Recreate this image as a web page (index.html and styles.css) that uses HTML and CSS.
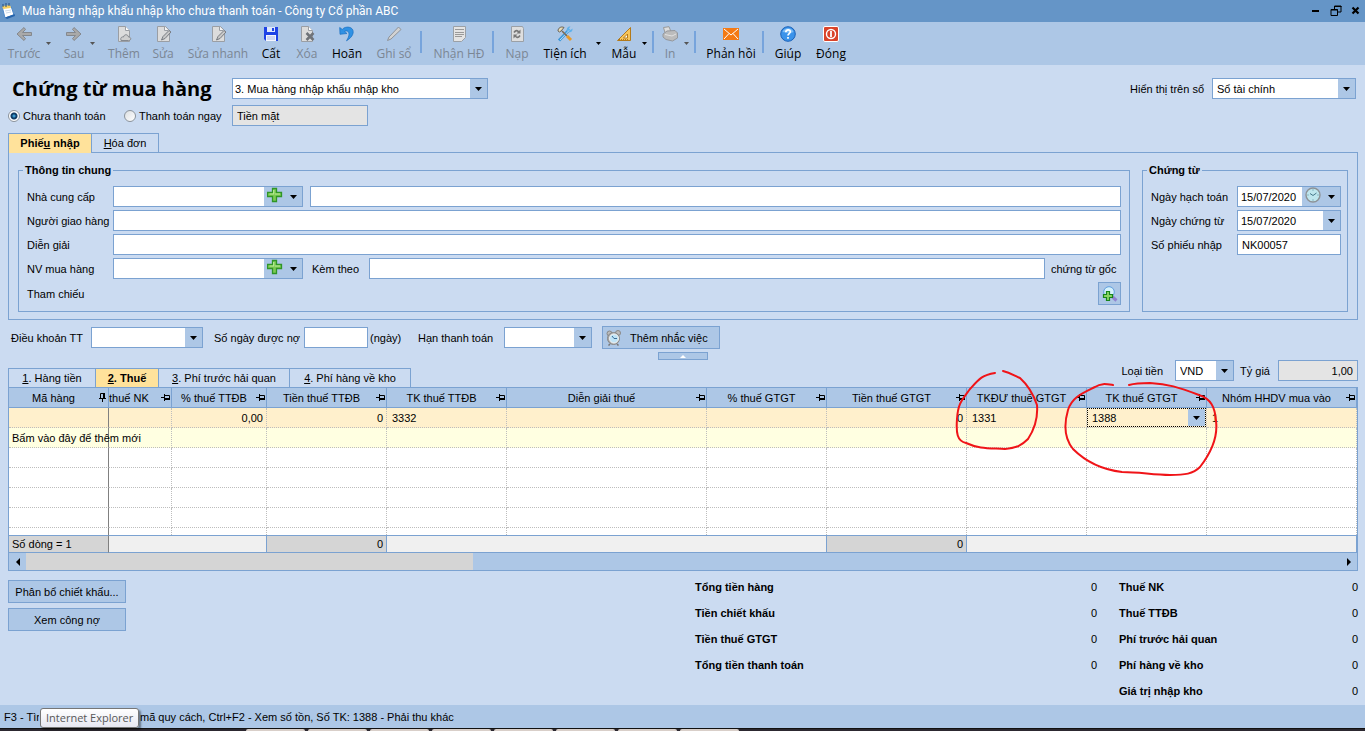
FILE: index.html
```html
<!DOCTYPE html>
<html lang="vi">
<head>
<meta charset="utf-8">
<title>Mua hàng nhập khẩu nhập kho chưa thanh toán</title>
<link rel="stylesheet" href="styles.css">
</head>
<body>
<svg class="defs" aria-hidden="true">
  <symbol id="pin" viewBox="0 0 9 9"><path d="M0 4.500h3M3.500 1v7M4 2.500h4.500v4M4 6h5" fill="none" stroke="#000"/><path d="M4 5h5v2H4z"/></symbol>
  <symbol id="down" viewBox="0 0 7 4"><path d="M0 0h7L3.500 4z"/></symbol>
  <symbol id="plus" viewBox="0 0 16 16"><path d="M5.500 1.500h4v4h5v4h-5v5h-4v-5h-5v-4h5z" fill="#7ccb52" stroke="#2f9527" stroke-width="1.300"/><path d="M6.700 3v4H2.500M8 7h5" fill="none" stroke="#b9eb98" stroke-width="1.200"/></symbol>
  <symbol id="doc" viewBox="0 0 16 16"><path d="M2.500.5h7l4 4v11h-11z" fill="#dcdcdc" stroke="#9a9ea4"/><path d="M9.500.5v4h4" fill="#fff" stroke="#9a9ea4"/></symbol>
  <symbol id="edit" viewBox="0 0 16 16"><path d="M2.500.5h8l4 4v11h-12z" fill="#dcdcdc" stroke="#9a9ea4"/><path d="M9.500.5v4h4" fill="#f5f5f5" stroke="#9a9ea4"/><path d="M14 4.500 8 10.500l-1.500 3.500L10 12.500 16 6z" fill="#c9c9c9" stroke="#777b81"/></symbol>
</svg>

<header class="titlebar">
  <svg class="app-icon" viewBox="0 0 16 16"><path d="M2 3h9l3 9-9 3z" fill="#fff" stroke="#4e88c8"/><path d="M2 3l8-1 1 3-8 1z" fill="#f6cf5e"/><path d="M5 14.500 14.500 11l.5 2-8 3z" fill="#2563ab"/><path d="M3 1v3M6 0v4M9 0v3" stroke="#274f84"/><path d="M5 8l6-1M6 10l5-1" stroke="#cbd9e8"/></svg>
  <span class="window-title">Mua hàng nhập khẩu nhập kho chưa thanh toán - Công ty Cổ phần ABC</span>
  <div class="window-buttons">
    <button type="button" aria-label="Thu nhỏ"><svg width="12" height="12" viewBox="0 0 12 12"><path d="M2 5h7v2H2z"/></svg></button>
    <button type="button" aria-label="Khôi phục"><svg width="12" height="12" viewBox="0 0 12 12"><path d="M4.500 4V1h6.500v6H8M1 4.500h6.500v6h-6.500zM4 1.500h7.500M1 5h7" fill="none" stroke="#000"/></svg></button>
    <button type="button" aria-label="Đóng cửa sổ"><svg width="12" height="12" viewBox="0 0 12 12"><path d="M2.500 2.500l6 6M8.500 2.500l-6 6" stroke="#000" stroke-width="2.200"/></svg></button>
  </div>
</header>

<nav class="toolbar">
  <button type="button" disabled><svg viewBox="0 0 16 16"><path d="M8 1.500 1 8l7 6.500 1.500-2L6.500 9.500h9v-3h-9l3-3z" fill="#a9a9a9" stroke="#84888e"/></svg>Trước</button>
  <button type="button" class="drop" disabled aria-label="Danh sách trước"><svg><use href="#down"/></svg></button>
  <button type="button" disabled><svg viewBox="0 0 16 16"><path d="M8 1.500 15 8l-7 6.500-1.500-2 3-3h-9v-3h9l-3-3z" fill="#a9a9a9" stroke="#84888e"/></svg>Sau</button>
  <button type="button" class="drop" disabled aria-label="Danh sách sau"><svg><use href="#down"/></svg></button>
  <button type="button" disabled><svg viewBox="0 0 16 16"><use href="#doc"/><path d="M5 14.500c-1-3 1-4 2.500-3.500C8 8 12 8 12.500 11c3 0 3 3.500 0 3.500z" fill="#cfcfcf" stroke="#85898f"/></svg>Thêm</button>
  <button type="button" disabled><svg viewBox="0 0 16 16"><use href="#edit"/></svg>Sửa</button>
  <button type="button" disabled><svg viewBox="0 0 16 16"><use href="#edit"/></svg>Sửa nhanh</button>
  <button type="button"><svg viewBox="0 0 16 16"><path d="M1 1h14v14H3l-2-2z" fill="#1f43e6"/><path d="M4 1h8v5H4z" fill="#dfe8fb"/><path d="M9 2h2v3H9z" fill="#1f43e6"/><path d="M3 9h10v6H3z" fill="#f4f6fd"/><path d="M4 11h8M4 13h8" stroke="#a9b8e8"/></svg>Cất</button>
  <button type="button" disabled><svg viewBox="0 0 16 16"><use href="#doc"/><path d="M7.500 7l7 7M14.500 7l-7 7" stroke="#6f7379" stroke-width="2.500"/></svg>Xóa</button>
  <button type="button"><svg viewBox="0 0 16 16"><path d="M.7 1.500 1 8.300 8 7.500 5.500 5.400C9 3.500 12.500 7 7.500 14.800 16.500 9.500 15.500 2 10 1.200 7.500.8 5 1.500 3.300 3.400z" fill="#2f91e4" stroke="#1a6fc0" stroke-width=".7"/></svg>Hoãn</button>
  <button type="button" disabled><svg viewBox="0 0 16 16"><path d="M12.500 1 15 3.500 5 13l-3.500 1.500L3 11z" fill="#d2d2d2" stroke="#8f9399"/></svg>Ghi sổ</button>
  <i class="sep"></i>
  <button type="button" disabled><svg viewBox="0 0 16 16"><path d="M2.500.5h12v11l-4 4h-8z" fill="#e4e4e4" stroke="#9ba0a6"/><path d="M4 3.500h9M4 6.500h9M4 8.500h9M4 10.500h7" stroke="#999"/></svg>Nhận HĐ</button>
  <i class="sep"></i>
  <button type="button" disabled><svg viewBox="0 0 16 16"><path d="M2.500.5h11l1 2v13h-12z" fill="#dedede" stroke="#9ba0a6"/><path d="M5 6.500c2-3 4-2 5 0M11 9.500c-2 3-4 2-5 0" fill="none" stroke="#777" stroke-width="1.600"/><path d="M11.500 3.500v4h-4zM4.500 12.500v-4h4z" fill="#777"/></svg>Nạp</button>
  <button type="button"><svg viewBox="0 0 16 16"><path d="M2 14.500 12 4" stroke="#3c97da" stroke-width="3"/><path d="M10 5c-1-3 1.500-5 3.500-4.500L12 2.500l1.500 1.500 2-1.500c.5 3-2 4.500-4 3.500z" fill="#5fb1ea"/><path d="M3 14 12 4.500" stroke="#b5def6"/><path d="M5 5l5 5" stroke="#7b6b55" stroke-width="1.600"/><path d="M1 5C1 2 4 0 7 1.500L4 5 2.500 6z" fill="#e8dcb8" stroke="#6c6558"/><path d="M10 10l4 4" stroke="#e99a28" stroke-width="3"/></svg>Tiện ích</button>
  <button type="button" class="drop" aria-label="Danh sách tiện ích"><svg><use href="#down"/></svg></button>
  <button type="button"><svg viewBox="0 0 16 16"><path d="M14.500 1.500v13h-13z" fill="#f7c55a" stroke="#b37a1b"/><path d="M11.500 8v4h-4z" fill="#fff" stroke="#b37a1b"/><path d="M3 13.500h10" stroke="#b37a1b" stroke-dasharray="1 1"/></svg>Mẫu</button>
  <button type="button" class="drop" aria-label="Danh sách mẫu"><svg><use href="#down"/></svg></button>
  <i class="sep"></i>
  <button type="button" disabled><svg viewBox="0 0 16 16"><path d="M1.500 1.500 7 .7l2 5-6 1z" fill="#ddd" stroke="#999"/><path d="M1 8 5 5l8-.500L15.500 7v5l-5 3L4 13.500 1 11z" fill="#bcbcbc" stroke="#94979c"/><path d="M3 8.500l7 1.500 4-2" fill="none" stroke="#e2e2e2"/></svg>In</button>
  <button type="button" class="drop" disabled aria-label="Danh sách in"><svg><use href="#down"/></svg></button>
  <i class="sep"></i>
  <button type="button"><svg viewBox="0 0 16 16"><path d="M0 2h16v12H0z" fill="#f47a14"/><path d="M1 3l7 6 7-6M1 13l5-5.500M15 13l-5-5.500" fill="none" stroke="#fff"/></svg>Phản hồi</button>
  <i class="sep"></i>
  <button type="button"><svg viewBox="0 0 16 16"><circle cx="8" cy="8" r="7.300" fill="#3b93ea" stroke="#1b62b8"/><path d="M2.500 6C4 1 12 1 13.500 6 10 8 6 6 2.500 6z" fill="#7dbdf6"/><path d="M5.800 6.200C5.800 3 10.600 3.200 10.300 6c-.2 1.600-2.300 1.700-2.300 3.500M8 11v1.700" fill="none" stroke="#fff" stroke-width="1.700"/></svg>Giúp</button>
  <button type="button"><svg viewBox="0 0 16 16"><rect x=".5" y=".5" width="15" height="15" rx="1.500" fill="#d9432a" stroke="#fff"/><circle cx="8" cy="8" r="4.500" fill="none" stroke="#fff" stroke-width="1.400"/><path d="M8 5v6" stroke="#fff" stroke-width="1.800"/></svg>Đóng</button>
</nav>

<main class="content">
  <div class="heading-row">
    <h1>Chứng từ mua hàng</h1>
    <select class="type-select" aria-label="Loại chứng từ"><option>3. Mua hàng nhập khẩu nhập kho</option></select>
    <label class="push" for="book">Hiển thị trên sổ</label>
    <select id="book" class="book-select"><option>Sổ tài chính</option></select>
  </div>
  <div class="payment-row">
    <label class="radio"><input type="radio" name="pay" checked>Chưa thanh toán</label>
    <label class="radio"><input type="radio" name="pay">Thanh toán ngay</label>
    <input class="cash" type="text" value="Tiền mặt" readonly aria-label="Phương thức thanh toán">
  </div>

  <div class="tabs" role="tablist">
    <button type="button" role="tab" class="tab active" aria-selected="true">Phiế<u>u</u> nhập</button>
    <button type="button" role="tab" class="tab invoice"><u>H</u>óa đơn</button>
  </div>
  <section class="panel">
    <fieldset class="general">
      <legend>Thông tin chung</legend>
      <div class="row">
        <label class="name" for="supplier">Nhà cung cấp</label>
        <div class="combo wide"><input id="supplier" type="text"><button type="button" class="add" aria-label="Thêm nhà cung cấp"><svg><use href="#plus"/></svg></button><button type="button" class="arrow" aria-label="Chọn"><svg><use href="#down"/></svg></button></div>
        <input class="grow after-combo" type="text" aria-label="Tên nhà cung cấp">
      </div>
      <div class="row"><label class="name" for="deliver">Người giao hàng</label><input id="deliver" class="grow" type="text"></div>
      <div class="row"><label class="name" for="desc">Diễn giải</label><input id="desc" class="grow" type="text"></div>
      <div class="row">
        <label class="name" for="staff">NV mua hàng</label>
        <div class="combo wide"><input id="staff" type="text"><button type="button" class="add" aria-label="Thêm nhân viên"><svg><use href="#plus"/></svg></button><button type="button" class="arrow" aria-label="Chọn"><svg><use href="#down"/></svg></button></div>
        <label class="attach" for="attach">Kèm theo</label>
        <input id="attach" class="grow" type="text">
        <span class="unit">chứng từ gốc</span>
      </div>
      <div class="row ref-row">
        <span class="name">Tham chiếu</span>
        <button type="button" class="btn lookup" aria-label="Tìm tham chiếu"><svg width="16" height="16" viewBox="0 0 16 16"><path d="M10.500 11l4 3.500" stroke="#8f83d0" stroke-width="3"/><circle cx="7" cy="6" r="5.300" fill="#d5f1fb" stroke="#5f9ede"/><path d="M4.500 5.500h3v3h3v3h-3v3h-3v-3h-3v-3h3z" fill="#8bd663" stroke="#16841b" stroke-width="1.200"/></svg></button>
      </div>
    </fieldset>
    <fieldset class="voucher">
      <legend>Chứng từ</legend>
      <div class="row">
        <label class="name" for="posted">Ngày hạch toán</label>
        <div class="combo grow"><input id="posted" type="text" value="15/07/2020"><button type="button" class="add clock" aria-label="Giờ"><svg viewBox="0 0 16 16"><circle cx="8" cy="8" r="7" fill="#bfe6ee" stroke="#8d9296" stroke-width="1.400"/><path d="M8 8.500 5 6.500M8 8.500l3.500-2.500" stroke="#45788a"/><path d="M8 2.500v1M8 12.500v1M2.500 8h1M12.500 8h1" stroke="#5b8795"/></svg></button><button type="button" class="arrow" aria-label="Chọn ngày"><svg><use href="#down"/></svg></button></div>
      </div>
      <div class="row">
        <label class="name" for="issued">Ngày chứng từ</label>
        <div class="combo grow"><input id="issued" type="text" value="15/07/2020"><button type="button" class="arrow" aria-label="Chọn ngày"><svg><use href="#down"/></svg></button></div>
      </div>
      <div class="row"><label class="name" for="number">Số phiếu nhập</label><input id="number" class="grow" type="text" value="NK00057"></div>
    </fieldset>
  </section>

  <div class="terms">
    <label class="terms-label" for="terms">Điều khoản TT</label>
    <select id="terms" class="terms-select"><option></option></select>
    <label class="days-label" for="days">Số ngày được nợ</label>
    <input id="days" class="days" type="text"><span class="days-unit">(ngày)</span>
    <label class="due-label" for="due">Hạn thanh toán</label>
    <select id="due" class="due-select"><option></option></select>
    <button type="button" class="btn remind"><svg width="16" height="16" viewBox="0 0 16 16"><circle cx="3.500" cy="3.500" r="2.500" fill="#bbb" stroke="#888"/><circle cx="12" cy="3" r="2.500" fill="#bbb" stroke="#888"/><path d="M4 14l-1.500 1.500M11 14l1.500 1.500" stroke="#777" stroke-width="1.500"/><circle cx="7.500" cy="8.500" r="6" fill="#a9a9a9" stroke="#888"/><circle cx="8" cy="8.500" r="4.500" fill="#bfe4f7" stroke="#f3f3f3"/><path d="M6 6l2 2.500h3" fill="none" stroke="#3a6c96"/></svg><span>Thêm nhắc việc</span></button>
  </div>
  <button type="button" class="collapse" aria-label="Thu gọn"><svg width="6" height="3" viewBox="0 0 6 3"><path d="M0 3h6L3 0z" fill="#fff"/></svg></button>

  <div class="grid-top">
    <div class="tabs" role="tablist">
      <button type="button" role="tab" class="tab t1"><u>1</u>. Hàng tiền</button>
      <button type="button" role="tab" class="tab t2 active" aria-selected="true"><u>2</u>. Thuế</button>
      <button type="button" role="tab" class="tab t3"><u>3</u>. Phí trước hải quan</button>
      <button type="button" role="tab" class="tab t4"><u>4</u>. Phí hàng về kho</button>
    </div>
    <div class="currency">
      <label for="cur">Loại tiền</label>
      <select id="cur" class="cur-select"><option>VND</option></select>
      <label class="rate-label" for="rate">Tỷ giá</label>
      <input id="rate" class="rate" type="text" value="1,00" readonly>
    </div>
  </div>

  <div class="grid">
    <table>
      <colgroup><col class="w100"><col class="w63"><col class="w95"><col class="w120"><col class="w120"><col><col class="w120"><col class="w140"><col class="w120"><col class="w120"><col class="w150"></colgroup>
      <thead><tr>
        <th><div class="head"><span>Mã hàng</span><svg class="pinned"><use href="#pin"/></svg></div></th>
        <th><div class="head cut"><span>thuế NK</span><svg><use href="#pin"/></svg></div></th>
        <th><div class="head"><span>% thuế TTĐB</span><svg><use href="#pin"/></svg></div></th>
        <th><div class="head"><span>Tiền thuế TTĐB</span><svg><use href="#pin"/></svg></div></th>
        <th><div class="head"><span>TK thuế TTĐB</span><svg><use href="#pin"/></svg></div></th>
        <th><div class="head"><span>Diễn giải thuế</span><svg><use href="#pin"/></svg></div></th>
        <th><div class="head"><span>% thuế GTGT</span><svg><use href="#pin"/></svg></div></th>
        <th><div class="head"><span>Tiền thuế GTGT</span><svg><use href="#pin"/></svg></div></th>
        <th><div class="head"><span>TKĐƯ thuế GTGT</span><svg><use href="#pin"/></svg></div></th>
        <th><div class="head"><span>TK thuế GTGT</span><svg><use href="#pin"/></svg></div></th>
        <th><div class="head"><span>Nhóm HHDV mua vào</span><svg><use href="#pin"/></svg></div></th>
      </tr></thead>
      <tbody>
        <tr class="current"><td></td><td></td><td class="num">0,00</td><td class="num">0</td><td>3332</td><td></td><td></td><td class="num">0</td><td>1331</td><td class="editing"><div class="cell-combo"><input type="text" value="1388" aria-label="TK thuế GTGT"><button type="button" class="arrow" aria-label="Chọn tài khoản"><svg><use href="#down"/></svg></button></div></td><td>1</td></tr>
        <tr class="new"><td class="hint">Bấm vào đây để thêm mới</td><td></td><td></td><td></td><td></td><td></td><td></td><td></td><td></td><td></td><td></td></tr>
        <tr><td></td><td></td><td></td><td></td><td></td><td></td><td></td><td></td><td></td><td></td><td></td></tr>
        <tr><td></td><td></td><td></td><td></td><td></td><td></td><td></td><td></td><td></td><td></td><td></td></tr>
        <tr><td></td><td></td><td></td><td></td><td></td><td></td><td></td><td></td><td></td><td></td><td></td></tr>
        <tr><td></td><td></td><td></td><td></td><td></td><td></td><td></td><td></td><td></td><td></td><td></td></tr>
        <tr class="partial"><td></td><td></td><td></td><td></td><td></td><td></td><td></td><td></td><td></td><td></td><td></td></tr>
      </tbody>
      <tfoot><tr><td class="sum frozen">Số dòng = 1</td><td colspan="2"></td><td class="sum num">0</td><td colspan="3"></td><td class="sum num">0</td><td colspan="3"></td></tr></tfoot>
    </table>
    <div class="scrollbar">
      <button type="button" aria-label="Cuộn trái"><svg width="4" height="8" viewBox="0 0 4 8"><path d="M4 0v8L0 4z"/></svg></button>
      <div class="track"><div class="thumb"></div></div>
      <button type="button" aria-label="Cuộn phải"><svg width="4" height="8" viewBox="0 0 4 8"><path d="M0 0v8l4-4z"/></svg></button>
    </div>
    <svg class="marks" viewBox="950 365 275 120" aria-hidden="true"><path d="M995 374C982 376 979 380 970 390 962 401 958 404 957 420 956 434 957 442 966 444 979 450 990 449 1005 450 1017 449 1022 446 1028 440 1036 428 1038 418 1037 406 1034 397 1030 388 1020 379 1013 376 1011 374 1003 372M1113 386C1106 385 1101 384 1095 388 1083 394 1072 398 1068 411 1063 428 1065 440 1073 450 1087 464 1105 471 1122 473 1140 473 1153 476 1170 476 1185 476 1193 475 1200 468 1213 451 1218 437 1216 422 1215 408 1211 400 1199 396 1178 388 1168 385 1150 384 1140 384 1136 384 1129 386"/></svg>
  </div>

  <div class="bottom">
    <div class="actions"><button type="button" class="btn">Phân bổ chiết khấu...</button><button type="button" class="btn">Xem công nợ</button></div>
    <div class="totals">
      <dl>
        <div><dt>Tổng tiền hàng</dt><dd>0</dd></div>
        <div><dt>Tiền chiết khấu</dt><dd>0</dd></div>
        <div><dt>Tiền thuế GTGT</dt><dd>0</dd></div>
        <div><dt>Tổng tiền thanh toán</dt><dd>0</dd></div>
      </dl>
      <dl class="taxes">
        <div><dt>Thuế NK</dt><dd>0</dd></div>
        <div><dt>Thuế TTĐB</dt><dd>0</dd></div>
        <div><dt>Phí trước hải quan</dt><dd>0</dd></div>
        <div><dt>Phí hàng về kho</dt><dd>0</dd></div>
        <div><dt>Giá trị nhập kho</dt><dd>0</dd></div>
      </dl>
    </div>
  </div>
</main>

<footer class="status">
  <span class="status-start">F3 - Tìm</span><span>mã quy cách, Ctrl+F2 - Xem số tồn, Số TK: 1388 - Phải thu khác</span>
  <div class="tooltip" role="tooltip">Internet Explorer</div>
</footer>
<div class="taskbar"><i></i><i></i><i></i><i></i><i></i><i></i><i></i><i></i></div>
</body>
</html>
```

FILE: styles.css
```css
:root {
  --line: #7ba2d1;
  --bar: #adc7e6;
  --page: #cbdbf1;
  --arrow: url("data:image/svg+xml,%3Csvg xmlns='http://www.w3.org/2000/svg' width='7' height='4'%3E%3Cpath d='M0 0h7L3.500 4z'/%3E%3C/svg%3E");
}
* { box-sizing: border-box; }
body {
  margin: 0;
  min-height: 100vh;
  display: flex;
  flex-direction: column;
  background: var(--page);
  color: #000;
  font: 11px/16px "Liberation Sans", Arial, sans-serif;
}
button, input, select { font: inherit; color: inherit; border-radius: 0; margin: 0; }
button { padding: 0; border: 0; background: none; }
svg { display: block; flex: none; }
.defs { position: absolute; width: 0; height: 0; }
label, span { white-space: nowrap; }

.titlebar {
  height: 22px;
  display: flex;
  align-items: center;
  background: #6595c7;
  color: #fff;
  font: 12px/16px Roboto, "Noto Sans", sans-serif;
}
.app-icon { width: 16px; height: 16px; margin-right: 6px; }
.window-buttons { margin-left: auto; display: flex; gap: 8px; padding-right: 3px; }

.toolbar {
  height: 43px;
  padding: 4px 4px 0;
  display: grid;
  grid-template-columns: 40px 16px 28px 16px 40px 38px 72px 34px 38px 42px 52px 6px 66px 6px 38px 58px 14px 32px 12px 6px 24px 12px 6px 62px 6px 40px 46px;
  background: var(--bar);
  font: 12px/16px "Open Sans", "Noto Sans", sans-serif;
}
.toolbar button {
  display: flex;
  flex-direction: column;
  align-items: center;
  gap: 4px;
  white-space: nowrap;
}
.toolbar button svg { width: 16px; height: 16px; }
.toolbar button:disabled { color: #7b8694; }
.toolbar .drop { align-items: flex-start; padding: 16px 0 0 2px; }
.toolbar .drop svg { width: 5px; height: 3px; }
.toolbar .drop:disabled svg { fill: #555; }
.sep { width: 2px; height: 22px; margin-top: 5px; background: #77a4dc; }

.content { flex: 1; padding: 13px 7px 0 8px; }

input[type="text"], select {
  height: 21px;
  border: 1px solid var(--line);
  background-color: #fff;
  padding: 0 4px;
  min-width: 0;
}
select {
  appearance: none;
  background-image: var(--arrow), linear-gradient(var(--bar), var(--bar));
  background-repeat: no-repeat;
  background-position: right 5px center, right top;
  background-size: 7px 4px, 17px 100%;
}
input[readonly] { background-color: #e4e4e4; }

.heading-row { display: flex; align-items: center; height: 21px; padding-right: 2px; }
h1 { margin: 0; width: 224px; padding-left: 4px; font: bold 20px/21px "Open Sans", "Noto Sans", sans-serif; white-space: nowrap; }
.type-select { width: 256px; padding-left: 2px; }
.push { margin-left: auto; margin-right: 8px; }
.book-select { width: 144px; }
.payment-row { display: flex; align-items: center; margin-top: 6px; }
.radio { display: flex; align-items: center; gap: 3px; width: 116px; }
.radio + .radio { width: 108px; }
.radio input {
  appearance: none;
  width: 12px;
  height: 12px;
  border: 1px solid #8b939c;
  border-radius: 50%;
  background: linear-gradient(135deg, #dcdfe2, #fff);
}
.radio input:checked { background: radial-gradient(circle, #3c9bd0 0 1px, #123e66 2px 3px, #fff 4px); }
.cash { width: 136px; padding-left: 2px; }

.tabs { display: flex; position: relative; z-index: 1; }
.payment-row + .tabs { margin-top: 7px; }
.tab {
  height: 19px;
  border: 1px solid var(--line);
  border-width: 1px 1px 0 0;
  text-align: center;
}
.tab:first-child { border-left-width: 1px; width: 84px; }
.tab.active { background: #ffe29b; font-weight: bold; margin-bottom: -1px; height: 20px; padding-bottom: 1px; }
.tab.invoice { width: 67px; }
.tab.t1:first-child { width: 88px; }
.tab.t2 { width: 63px; }
.tab.t3 { width: 131px; }
.tab.t4 { width: 121px; }

.panel { display: flex; gap: 12px; padding: 9px 9px 7px; border: 1px solid var(--line); }
fieldset {
  margin: 0;
  min-width: 0;
  padding: 8px 8px 6px;
  border: 1px solid var(--line);
  display: flex;
  flex-direction: column;
  gap: 3px;
}
legend { padding: 0 2px; margin-left: -4px; font-weight: bold; }
.general { flex: 1; }
.voucher { width: 206px; padding-right: 6px; }
.row { display: flex; align-items: center; min-height: 21px; }
.name { flex: none; width: 86px; }
.grow { flex: 1; }
.after-combo { margin-left: 7px; }
.combo { display: flex; min-width: 0; border: 1px solid var(--line); background: var(--bar); }
.combo.wide { width: 190px; }
.combo input[type="text"] { flex: 1; width: 0; height: 19px; border: 0; padding: 0 3px; }
.add { width: 21px; display: flex; justify-content: center; }
.add svg { width: 16px; height: 16px; }
.arrow { width: 17px; display: flex; align-items: center; justify-content: center; background: var(--bar); }
.arrow svg { width: 7px; height: 4px; }
.attach { width: 66px; padding-left: 9px; }
.unit { width: 76px; padding-left: 6px; }
.ref-row { justify-content: space-between; }
.btn { height: 23px; border: 1px solid var(--line); background: var(--bar); }
.lookup { width: 23px; display: flex; align-items: center; justify-content: center; }

.terms { display: flex; align-items: center; margin-top: 6px; }
.terms-label { width: 83px; padding-left: 3px; }
.terms-select { width: 112px; }
.days-label { width: 101px; padding-left: 11px; }
.days { width: 64px; }
.days-unit { width: 42px; padding-left: 2px; }
.due-label { width: 94px; padding-left: 8px; }
.due-select { width: 88px; }
.remind { display: flex; align-items: center; width: 118px; margin-left: 10px; padding-left: 3px; gap: 8px; }
.collapse {
  width: 50px;
  height: 8px;
  margin: 3px auto 0;
  display: flex;
  align-items: center;
  justify-content: center;
  border: 1px solid var(--line);
  background: var(--bar);
}
.grid-top { display: flex; height: 27px; justify-content: space-between; }
.grid-top .tabs { align-self: flex-end; }
.grid-top .tab.active { margin-bottom: 0; height: 19px; }
.currency { display: flex; height: 21px; align-items: center; gap: 6px; }
.currency label:first-child { margin-right: 6px; }
.cur-select { width: 59px; }
.rate { width: 80px; text-align: right; margin-left: 2px; }

.grid { position: relative; border: 1px solid var(--line); background: #fff; }
table { width: 100%; table-layout: fixed; border-collapse: separate; border-spacing: 0; }
.w63 { width: 63px; }
.w95 { width: 95px; }
.w100 { width: 100px; }
.w120 { width: 120px; }
.w140 { width: 140px; }
.w150 { width: 150px; }
th { height: 20px; padding: 0; font-weight: normal; background: var(--bar); border: 1px solid var(--line); border-width: 0 1px 1px 0; }
.head { display: flex; align-items: center; padding-right: 1px; overflow: hidden; }
.head span { flex: 1; }
.head.cut { text-align: left; }
.head svg { width: 9px; height: 9px; }
.head .pinned { transform: rotate(-90deg); }
td { height: 20px; padding: 0 5px; line-height: 16px; white-space: nowrap; border: 1px dotted #bdbdbd; border-width: 0 1px 1px 0; }
td.num { text-align: right; padding: 0 3px; }
tbody td:first-child { border-right: 1px solid #808080; }
td.hint, tfoot td.frozen { padding: 0 3px; }
.current { background: #fff0cc; }
.new { background: #ffffe1; }
.partial td { height: 7px; border-bottom: 0; }
td.editing { padding: 0; }
.cell-combo { display: flex; height: 19px; border: 1px dotted #000; }
.cell-combo input[type="text"] { flex: 1; width: 0; height: 17px; border: 0; padding: 0 4px; background: none; }
tfoot td { height: 18px; background: #f0f0f0; border: 1px solid var(--line); border-width: 1px 1px 1px 0; }
tfoot .sum { background: #d5d5d5; }
tfoot .frozen { border-right-color: #808080; }
.scrollbar { display: flex; height: 17px; background: var(--bar); }
.scrollbar button { width: 17px; display: flex; align-items: center; justify-content: center; }
.track { flex: 1; }
.thumb { width: 34%; height: 100%; background: #d5d5d5; }
.marks {
  position: absolute;
  right: 132px;
  top: -24px;
  width: 275px;
  height: 120px;
  fill: none;
  stroke: #f01418;
  stroke-width: 2;
  stroke-linecap: round;
  pointer-events: none;
}

.bottom { display: flex; justify-content: space-between; }
.actions { display: flex; flex-direction: column; gap: 5px; padding-top: 9px; width: 118px; }
.totals { display: flex; gap: 22px; padding-top: 3px; }
dl { margin: 0; width: 402px; }
.taxes { width: 239px; }
dl div { display: flex; justify-content: space-between; line-height: 26px; }
dt { font-weight: bold; }
dd { margin: 0; }

.status { position: relative; display: flex; height: 23px; align-items: center; gap: 101px; padding-left: 4px; background: var(--bar); }
.status-start { width: 35px; overflow: hidden; }
.tooltip {
  position: absolute;
  left: 40px;
  top: 3px;
  height: 20px;
  padding: 0 5px;
  border: 1px solid #767676;
  border-radius: 3px;
  background: linear-gradient(#fff, #e6e7f1);
  box-shadow: 2px 2px 2px #00000066;
  color: #575757;
  font: 11px/18px "Open Sans", "Noto Sans", sans-serif;
}
.taskbar { height: 3px; display: flex; gap: 3px; padding: 0 0 0 246px; background: #2c2830; border-top: 1px solid #111; }
.taskbar i { width: 59px; background: #d9cfc9; border-radius: 2px 2px 0 0; }
```
